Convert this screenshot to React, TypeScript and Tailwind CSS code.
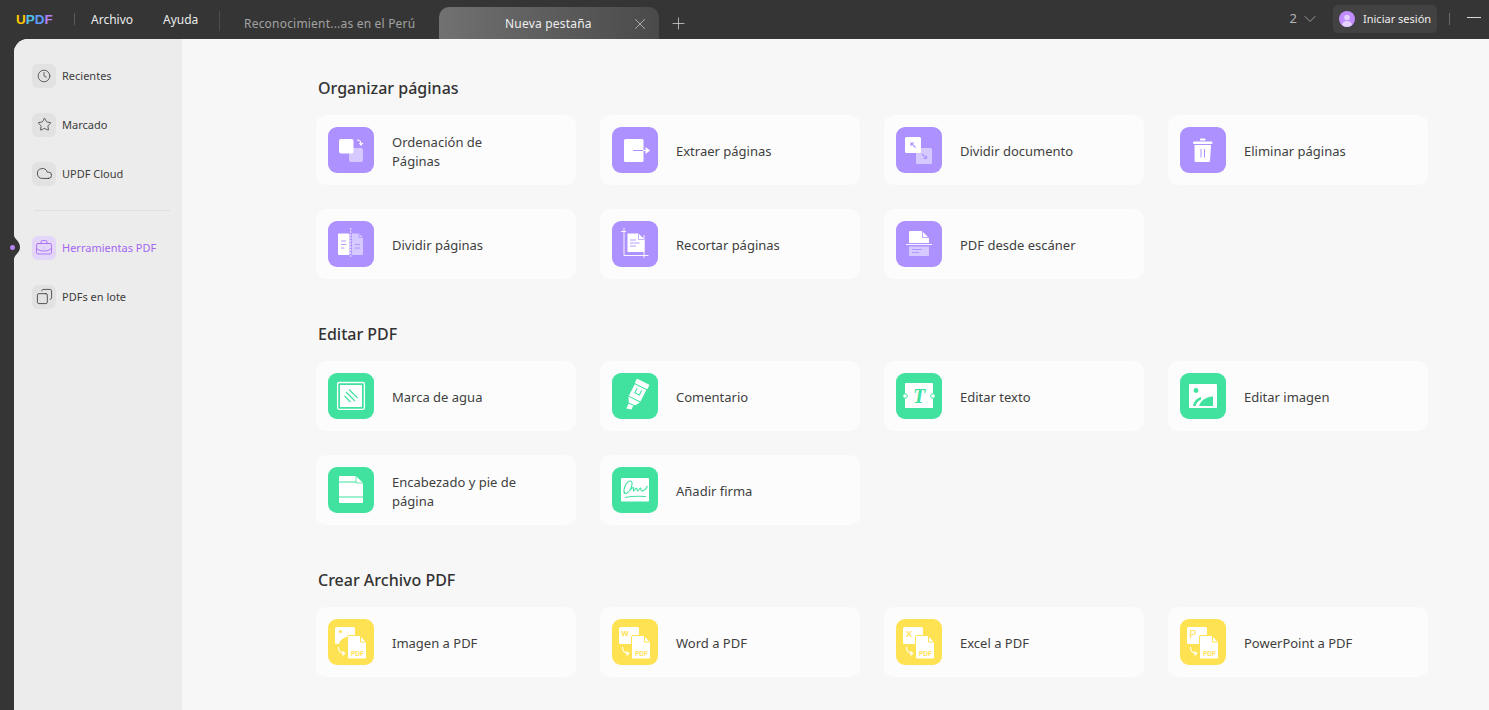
import type { ReactNode } from 'react';
import { BriefcaseBusiness, ChevronDown, Clock, Cloud, Copy, Plus, Star, X } from 'lucide-react';

const PURPLE = '#ac91ff';
const LILAC = '#d6c9ff';
const GREEN = '#41e2a0';
const YELLOW = '#ffe252';

function Tile({ bg, children }: { bg: string; children: ReactNode }) {
  return (
    <svg width="46" height="46" viewBox="0 0 46 46" className="shrink-0">
      <rect width="46" height="46" rx="9" fill={bg} />
      {children}
    </svg>
  );
}

// Yellow "x to PDF" icons share the same back sheet, arrow and front page
function ToPdf({ children }: { children: ReactNode }) {
  return (
    <Tile bg={YELLOW}>
      <rect x="7" y="8" width="20" height="17" rx="1.500" fill="#fff" />
      {children}
      <path d="M21 16.500h11l6.500 6.500v15.500a1.500 1.500 0 0 1-1.500 1.500h-16a1.500 1.500 0 0 1-1.500-1.500v-20.500a1.500 1.500 0 0 1 1.500-1.500z" fill="#fff" stroke={YELLOW} strokeWidth="1" />
      <path d="M32.500 17v6h6" fill="none" stroke={YELLOW} strokeWidth="1" />
      <text x="29.500" y="36.500" textAnchor="middle" fontSize="6.500" fontWeight="700" fill={YELLOW} fontFamily="'Liberation Sans', sans-serif">PDF</text>
      <path d="M10.500 28c0 4 2 6.500 6 6.500M14.500 32.500l2.200 2-2.200 2" fill="none" stroke="#fff" strokeWidth="1.100" />
    </Tile>
  );
}

const icons = {
  ordenar: (
    <Tile bg={PURPLE}>
      <rect x="21" y="21" width="14" height="14" rx="2" fill={LILAC} />
      <rect x="11" y="12" width="14.500" height="14.500" rx="2" fill="#fff" />
      <path d="M29 13c2.500 0 4 1.500 4 4M31.300 16l1.700 2.200 1.800-2.200" fill="none" stroke="#fff" strokeWidth="1.100" />
    </Tile>
  ),
  extraer: (
    <Tile bg={PURPLE}>
      <rect x="12" y="12" width="19.500" height="23" rx="1.500" fill="#fff" />
      <path d="M21 23.500h10" stroke={PURPLE} strokeWidth="1.200" />
      <path d="M31 23.500h3" stroke="#fff" strokeWidth="1.200" />
      <path d="M33.500 20l4.500 3.500-4.500 3.500z" fill="#fff" />
    </Tile>
  ),
  dividirDoc: (
    <Tile bg={PURPLE}>
      <rect x="20" y="21" width="16" height="16" rx="1.500" fill={LILAC} />
      <rect x="9" y="10" width="16" height="16" rx="1.500" fill="#fff" />
      <path d="M19.500 20.500l-4.500-4.500M15 19v-3h3" fill="none" stroke={PURPLE} strokeWidth="1.100" />
      <path d="M26 27l4.500 4.500M30.500 28.500v3h-3" fill="none" stroke={PURPLE} strokeWidth="1.100" />
    </Tile>
  ),
  eliminar: (
    <Tile bg={PURPLE}>
      <rect x="20" y="11.500" width="5.500" height="2" rx="0.800" fill="#fff" />
      <rect x="13" y="14.500" width="19.500" height="2.500" rx="1.200" fill="#fff" />
      <path d="M14.500 18h16.500l-1 16a1.200 1.200 0 0 1-1.200 1h-13a1.200 1.200 0 0 1-1.200-1z" fill="#fff" />
      <path d="M21 22v8.500M24.500 22v8.500" stroke={PURPLE} strokeWidth="1" />
    </Tile>
  ),
  dividirPag: (
    <Tile bg={PURPLE}>
      <rect x="10" y="12.500" width="11.500" height="21.500" rx="1" fill="#fff" />
      <path d="M24 12.500h7l4 4v16.500a1 1 0 0 1-1 1h-10z" fill={LILAC} />
      <path d="M31 12.500v4h4" fill="none" stroke={PURPLE} strokeWidth="0.700" />
      <path d="M22.700 7v30" stroke="#fff" strokeWidth="0.800" strokeDasharray="2 1" />
      <path d="M13 20h5M13 23.500h5M13 27h3.500" stroke={PURPLE} strokeWidth="0.900" />
      <path d="M27 23.500h5M27 27h5" stroke={PURPLE} strokeWidth="0.900" />
    </Tile>
  ),
  recortar: (
    <Tile bg={PURPLE}>
      <path d="M9 10.500h5M12 7v27.500h24.500M32 14v23" fill="none" stroke="#fff" strokeWidth="0.900" />
      <path d="M15.500 12.500h11l6 6v12.500h-17z" fill="#fff" />
      <path d="M26.500 12.500v6h6" fill="none" stroke={PURPLE} strokeWidth="0.700" />
      <path d="M18 19h6M18 22h9.500M18 25h6" stroke={PURPLE} strokeWidth="0.900" />
    </Tile>
  ),
  escaner: (
    <Tile bg={PURPLE}>
      <path d="M14 10h12l7 7v5H13v-11a1 1 0 0 1 1-1z" fill="#fff" />
      <path d="M26.500 10v6.500H33" fill="none" stroke={PURPLE} strokeWidth="0.800" />
      <path d="M10 23.500h26" stroke="#fff" strokeWidth="0.900" />
      <path d="M13 25.500h20v8.500a1 1 0 0 1-1 1H14a1 1 0 0 1-1-1z" fill={LILAC} />
      <path d="M16 28.500h10M16 31.500h7" stroke={PURPLE} strokeWidth="0.900" />
    </Tile>
  ),
  agua: (
    <Tile bg={GREEN}>
      <rect x="9.600" y="9.500" width="26.800" height="26.800" rx="1.500" fill="none" stroke="#fff" strokeWidth="1.300" />
      <rect x="12" y="12" width="22" height="22" rx="0.800" fill="#fff" />
      <path d="M18 19l9 9M21 16.500l8.500 8.500M16.500 23l6 6" stroke={GREEN} strokeWidth="1.200" />
    </Tile>
  ),
  comentario: (
    <Tile bg={GREEN}>
      <g transform="rotate(27 24 23)">
        <rect x="17" y="7" width="14" height="5" rx="0.800" fill="#fff" />
        <rect x="17.500" y="13" width="13" height="13" fill="#fff" />
        <path d="M17.500 27h13l-3 5h-7z" fill="#fff" />
        <path d="M21 33h5v4l-5 1.500z" fill="#fff" />
        <path d="M21.500 15.500v5h5v-5" fill="none" stroke={GREEN} strokeWidth="1.100" />
      </g>
    </Tile>
  ),
  texto: (
    <Tile bg={GREEN}>
      <rect x="9" y="10" width="28" height="25" rx="0.500" fill="#fff" />
      <circle cx="9" cy="23" r="2.300" fill="#fff" stroke={GREEN} strokeWidth="1" />
      <circle cx="37" cy="23" r="2.300" fill="#fff" stroke={GREEN} strokeWidth="1" />
      <text x="23" y="30" textAnchor="middle" fontSize="20" fontWeight="700" fontStyle="italic" fill={GREEN} fontFamily="'Liberation Serif', serif">T</text>
    </Tile>
  ),
  imagen: (
    <Tile bg={GREEN}>
      <rect x="9" y="11" width="28" height="24" rx="1" fill="#fff" />
      <circle cx="16" cy="17.500" r="2.400" fill={GREEN} />
      <path d="M13 33c1-5 4-8 8-9v2.500c-2.500 1-4.500 3.500-5.500 6.500z" fill={GREEN} />
      <path d="M19 33c1.500-5 6-9 14-9.500v9.500z" fill={GREEN} />
    </Tile>
  ),
  encabezado: (
    <Tile bg={GREEN}>
      <path d="M12 9h16l7 7v19a1 1 0 0 1-1 1H12a1 1 0 0 1-1-1V10a1 1 0 0 1 1-1z" fill="#fff" />
      <path d="M28 9v7h7" fill="none" stroke={GREEN} strokeWidth="0.800" />
      <rect x="11" y="14.500" width="17" height="1" fill={GREEN} />
      <rect x="11" y="29.500" width="24" height="1" fill={GREEN} />
    </Tile>
  ),
  firma: (
    <Tile bg={GREEN}>
      <rect x="9" y="11" width="28" height="23.500" rx="0.800" fill="#fff" />
      <path d="M12.500 27c-2-6 2.500-13 6-13 2.800 0 1.500 7-1.200 10-1.800 2-4 3.500-4 1.500M19 22c1-1 2-2 2.500-1s-.5 3 0 3c1 0 2-3 3-3s0 3 1 3 2-3 3-3 0 3 1 3c2 0 4.500-2 6-5" fill="none" stroke={GREEN} strokeWidth="1.100" />
      <path d="M13 30.500c7-1.500 14-1.500 21-1" fill="none" stroke={GREEN} strokeWidth="1.100" />
    </Tile>
  ),
  imgPdf: (
    <ToPdf>
      <circle cx="12.500" cy="12.500" r="1.500" fill={YELLOW} />
      <path d="M11 25c1-4 4-6.500 9-7v7z" fill={YELLOW} />
    </ToPdf>
  ),
  wordPdf: (
    <ToPdf>
      <text x="13" y="17" textAnchor="middle" fontSize="8" fontWeight="700" fill={YELLOW} fontFamily="'Liberation Sans', sans-serif">W</text>
    </ToPdf>
  ),
  excelPdf: (
    <ToPdf>
      <text x="13" y="18" textAnchor="middle" fontSize="9" fontWeight="700" fill={YELLOW} fontFamily="'Liberation Sans', sans-serif">X</text>
    </ToPdf>
  ),
  pptPdf: (
    <ToPdf>
      <text x="13" y="19" textAnchor="middle" fontSize="11" fill={YELLOW} fontFamily="'Liberation Sans', sans-serif">P</text>
    </ToPdf>
  ),
};

type Tool = { label: ReactNode; icon: ReactNode };

const sections: { title: string; tools: Tool[] }[] = [
  {
    title: 'Organizar páginas',
    tools: [
      { label: <>Ordenación de<br />Páginas</>, icon: icons.ordenar },
      { label: 'Extraer páginas', icon: icons.extraer },
      { label: 'Dividir documento', icon: icons.dividirDoc },
      { label: 'Eliminar páginas', icon: icons.eliminar },
      { label: 'Dividir páginas', icon: icons.dividirPag },
      { label: 'Recortar páginas', icon: icons.recortar },
      { label: 'PDF desde escáner', icon: icons.escaner },
    ],
  },
  {
    title: 'Editar PDF',
    tools: [
      { label: 'Marca de agua', icon: icons.agua },
      { label: 'Comentario', icon: icons.comentario },
      { label: 'Editar texto', icon: icons.texto },
      { label: 'Editar imagen', icon: icons.imagen },
      { label: <>Encabezado y pie de<br />página</>, icon: icons.encabezado },
      { label: 'Añadir firma', icon: icons.firma },
    ],
  },
  {
    title: 'Crear Archivo PDF',
    tools: [
      { label: 'Imagen a PDF', icon: icons.imgPdf },
      { label: 'Word a PDF', icon: icons.wordPdf },
      { label: 'Excel a PDF', icon: icons.excelPdf },
      { label: 'PowerPoint a PDF', icon: icons.pptPdf },
    ],
  },
];

function SideItem({ icon, label, active }: { icon: ReactNode; label: string; active?: boolean }) {
  return (
    <div className="flex h-[25px] items-center gap-1.5">
      <div className={`flex h-6 w-6 items-center justify-center rounded-md ${active ? 'bg-[#e3d6f9] text-[#a566f2]' : 'bg-[#e2e2e2] text-[#3d3d3d]'}`}>
        {icon}
      </div>
      <span className={`pt-px text-[11px] ${active ? 'text-[#a566f2]' : 'text-[#3d3d3d]'}`}>{label}</span>
    </div>
  );
}

export default function App() {
  return (
    <div className="flex h-screen flex-col overflow-hidden bg-[#353535] font-['Noto_Sans',sans-serif]">
      {/* Title bar */}
      <div className="flex h-[39px] shrink-0 items-start text-[12px]">
        <div className="ml-4 mt-[11px] w-[37px] whitespace-nowrap text-[13.500px] font-bold leading-[17px] font-['Liberation_Sans',sans-serif]">
          <span className="text-[#ffc800]">U</span>
          <span className="text-[#4fc3e8]">P</span>
          <span className="text-[#5f9bff]">D</span>
          <span className="text-[#b583f5]">F</span>
        </div>
        <div className="ml-[21px] mt-[13px] h-3 w-px bg-[#5a5a5a]" />
        <span className="ml-4 mt-[11px] w-[42px] leading-[18px] text-[#ececec]">Archivo</span>
        <span className="ml-[30px] mt-[11px] w-[35px] leading-[18px] text-[#ececec]">Ayuda</span>
        <div className="ml-[21px] mt-[11px] h-5 w-px bg-[#4c4c4c]" />
        <span className="ml-6 mt-[15px] w-[195px] leading-[18px] tracking-[0.2px] text-[#a2a2a2]">Reconocimient...as en el Perú</span>
        <div className="mt-[7px] flex h-8 w-[220px] items-center rounded-t-[10px] bg-linear-to-r from-[#717171] to-[#4a4a4a] pl-[66px] pr-[10px] pt-[1px]">
          <span className="flex-1 tracking-[0.2px] text-[#eeeeee]">Nueva pestaña</span>
          <X size={18} strokeWidth={0.9} className="text-[#dddddd]" />
        </div>
        <Plus size={19} strokeWidth={0.9} className="ml-[10px] mt-3.5 text-[#e2e2e2]" />
        <div className="ml-auto flex items-center">
          <span className="mt-[5px] text-[13px] text-[#b4b4b4]">2</span>
          <ChevronDown size={20} strokeWidth={1} className="ml-[3px] mt-[5px] text-[#b0b0b0]" />
          <div className="ml-[13px] mt-[5px] flex h-7 w-[104px] items-center gap-2 rounded-[5px] bg-[#424242] pl-1.5">
            <svg width="16" height="16" viewBox="0 0 16 16" className="shrink-0">
              <circle cx="8" cy="8" r="8" fill="#c08cff" />
              <circle cx="8" cy="6.500" r="2.800" fill="#e4d0ff" />
              <path d="M3 14c.5-3 2.500-4 5-4s4.500 1 5 4c-1.400 1.300-3.100 2-5 2s-3.600-.7-5-2z" fill="#e4d0ff" />
            </svg>
            <span className="whitespace-nowrap text-[11px] text-[#eeeeee]">Iniciar sesión</span>
          </div>
          <div className="ml-3 mt-[5px] h-3 w-px bg-[#6a6a6a]" />
          <div className="ml-[17px] mr-2 mt-[1px] h-px w-3.5 bg-[#d8d8d8]" />
        </div>
      </div>

      {/* Body */}
      <div className="ml-3.5 flex min-h-0 flex-1 overflow-hidden rounded-tl-[14px] bg-[#f7f7f7] text-[#3c3c3c]">
        <aside className="w-[168px] shrink-0 bg-[#ececec] pl-[18px] pr-3 pt-6">
          <div className="flex flex-col gap-6">
            <SideItem icon={<Clock size={14} strokeWidth={1.3} />} label="Recientes" />
            <SideItem icon={<Star size={15} strokeWidth={1.3} />} label="Marcado" />
            <SideItem icon={<Cloud size={17} strokeWidth={1.2} />} label="UPDF Cloud" />
          </div>
          <div className="ml-0.5 mt-[24px] h-px bg-[#e0e0e0]" />
          <div className="mt-6 flex flex-col gap-6">
            <SideItem icon={<BriefcaseBusiness size={18} strokeWidth={1.1} />} label="Herramientas PDF" active />
            <SideItem icon={<Copy size={17} strokeWidth={1.2} className="-scale-x-100" />} label="PDFs en lote" />
          </div>
        </aside>

        <main className="min-w-0 flex-1 pl-[134px] pt-[37px]">
          {sections.map((section) => (
            <section key={section.title} className="mb-[43px]">
              <h2 className="mb-[15px] ml-0.5 text-[16px] font-medium leading-6 text-[#333333]">{section.title}</h2>
              <div className="grid grid-cols-[repeat(4,260px)] gap-6">
                {section.tools.map((tool, i) => (
                  <div key={i} className="flex h-[70px] items-center gap-[18px] rounded-[10px] bg-[#fcfcfc] px-3">
                    {tool.icon}
                    <span className="pt-[3px] text-[13px] leading-[19px] text-[#3f3f3f]">{tool.label}</span>
                  </div>
                ))}
              </div>
            </section>
          ))}
        </main>
      </div>

      {/* Active-item notch over the sidebar edge */}
      <svg width="6" height="24" viewBox="0 0 6 24" className="absolute left-[14px] top-[235px]">
        <path d="M0 0C0 4 6 6 6 12S0 20 0 24z" fill="#353535" />
      </svg>
      <div className="absolute left-[10px] top-[245px] h-[5px] w-[5px] rounded-full bg-[#b583f5]" />
    </div>
  );
}
